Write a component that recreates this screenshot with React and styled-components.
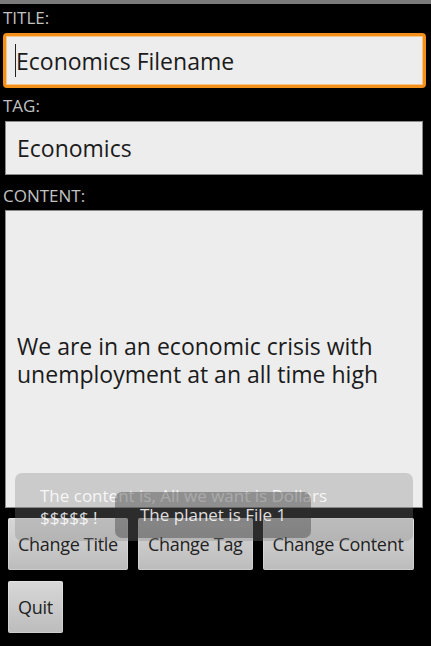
import React from 'react';
import styled, { createGlobalStyle } from 'styled-components';

const GlobalStyle = createGlobalStyle`
  html, body {
    margin: 0;
    padding: 0;
    background: #000;
  }
  body {
    font-family: "Open Sans", "DejaVu Sans", sans-serif;
    overflow: hidden;
  }
`;

const App = () => {
  return (
    <Screen>
      <GlobalStyle />
      <StatusBar />
      <Form>
        <Label>TITLE:</Label>
        <TitleField>
          <Caret />
          Economics Filename
        </TitleField>

        <Label $gap={5}>TAG:</Label>
        <TagField>Economics</TagField>

        <Label $gap={8}>CONTENT:</Label>
        <ContentBox>
          <ContentText>
            We are in an economic crisis with unemployment at an all time high
          </ContentText>
        </ContentBox>

        <ButtonRow>
          <Button>Change Title</Button>
          <Button>Change Tag</Button>
          <Button>Change Content</Button>
        </ButtonRow>
        <ButtonRow $gap={11}>
          <Button>Quit</Button>
        </ButtonRow>
      </Form>

      <Toast $left={15} $top={473} $bg="rgba(130,130,130,0.32)" $width={398}>
        The content is, All we want is Dollars
        <br />
        $$$$$ !
      </Toast>
      <Toast $left={115} $top={492} $bg="rgba(50,50,50,0.39)">
        The planet is File 1
      </Toast>
    </Screen>
  );
};

export default App;

const Screen = styled.div`
  position: relative;
  width: 431px;
  height: 646px;
  background: #000;
  overflow: hidden;
`;

const StatusBar = styled.div`
  height: 4px;
  background: #7a7a7a;
  border-bottom: 1px solid #000;
`;

const Form = styled.div`
  display: flex;
  flex-direction: column;
  padding: 0 8px 0 5px;
`;

const Label = styled.div`
  margin-top: ${(p) => p.$gap || 0}px;
  margin-left: -2px;
  height: 26px;
  line-height: 26px;
  font-size: 17px;
  color: #c2c2c2;
`;

const TitleField = styled.div`
  margin: 2px -3px 0 -2px;
  height: 55px;
  box-sizing: border-box;
  display: flex;
  align-items: center;
  padding-left: 9px;
  background: #ededed;
  border: 3px solid #f39019;
  border-radius: 4px;
  box-shadow: inset 0 0 0 1px #f7c58a;
  font-size: 23px;
  color: #1b1b1b;
`;

const Caret = styled.span`
  display: inline-block;
  width: 1px;
  height: 33px;
  background: #222;
`;

const TagField = styled.div`
  margin-top: 2px;
  height: 54px;
  box-sizing: border-box;
  display: flex;
  align-items: center;
  padding-left: 11px;
  background: #ededed;
  border: 1px solid #8a8a8a;
  font-size: 23px;
  color: #1b1b1b;
`;

const ContentBox = styled.div`
  margin-top: 1px;
  height: 298px;
  box-sizing: border-box;
  display: flex;
  align-items: center;
  padding: 0 11px;
  background: #ededed;
  border: 1px solid #8a8a8a;
`;

const ContentText = styled.div`
  font-size: 23px;
  line-height: 28px;
  color: #1b1b1b;
  margin-top: 2px;
`;

const ButtonRow = styled.div`
  display: flex;
  gap: 10px;
  margin-top: ${(p) => p.$gap || 10}px;
  padding-left: 3px;
`;

const Button = styled.div`
  height: 52px;
  box-sizing: border-box;
  display: flex;
  align-items: center;
  padding: 0 10px 1px;
  background: linear-gradient(#d8d8d8, #bcbcbc);
  border-radius: 2px;
  box-shadow: inset 0 0 0 1px rgba(255, 255, 255, 0.25);
  font-size: 18px;
  letter-spacing: -0.3px;
  color: #222;
  white-space: nowrap;
`;

const Toast = styled.div`
  position: absolute;
  left: ${(p) => p.$left}px;
  top: ${(p) => p.$top}px;
  width: ${(p) => (p.$width ? `${p.$width}px` : 'auto')};
  box-sizing: border-box;
  padding: 12px 25px;
  background: ${(p) => p.$bg};
  border-radius: 7px;
  font-size: 17px;
  line-height: 22px;
  color: rgba(255, 255, 255, 0.85);
  white-space: nowrap;
`;
